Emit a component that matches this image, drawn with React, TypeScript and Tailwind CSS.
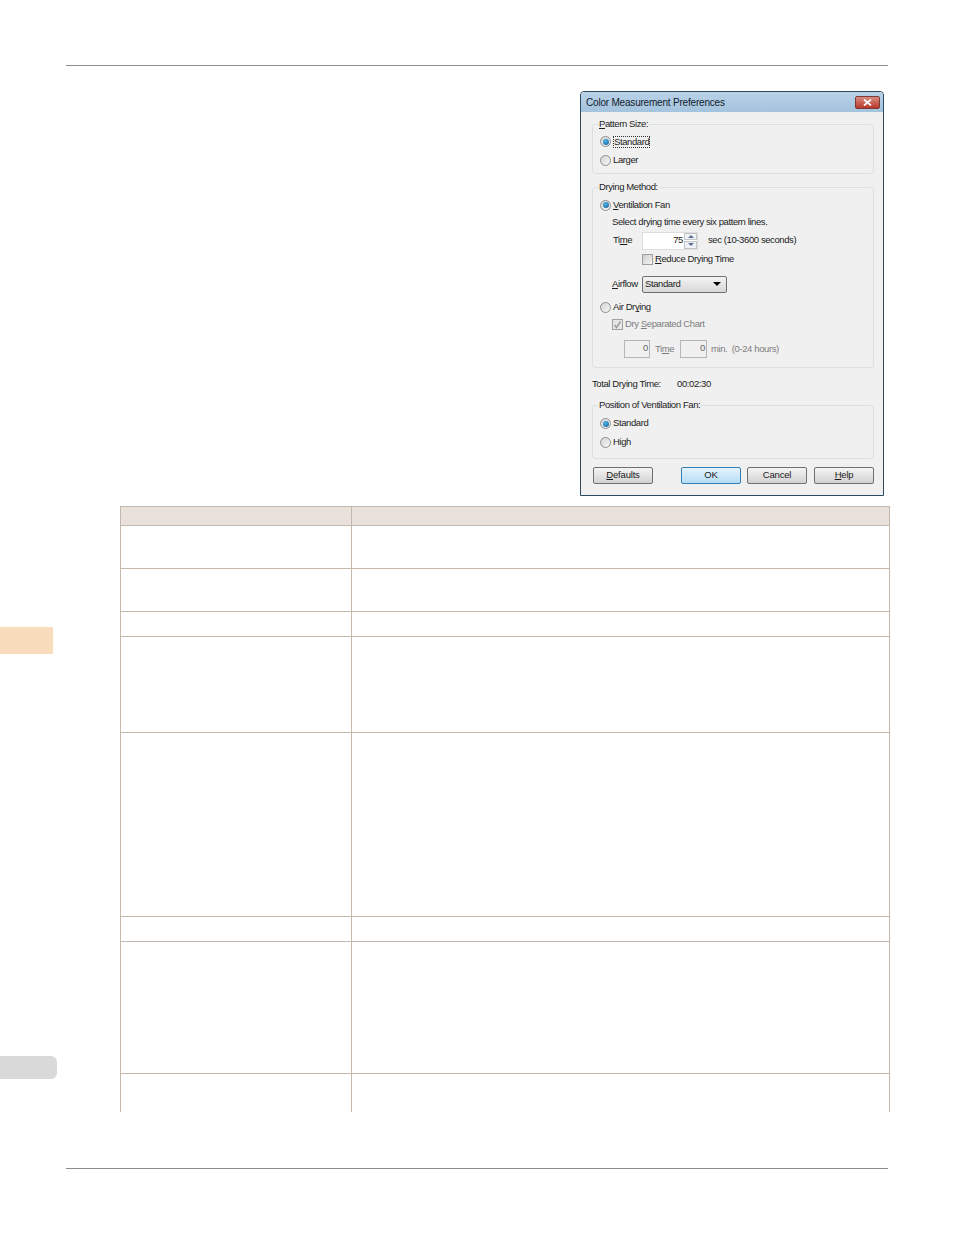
import type { ReactNode } from 'react';

const rows = [
  { height: 'h-[42px]' },
  { height: 'h-[43px]' },
  { height: 'h-[25px]' },
  { height: 'h-[96px]' },
  { height: 'h-[184px]' },
  { height: 'h-[25px]' },
  { height: 'h-[132px]' },
  { height: 'h-[39px]' },
];

function Radio({ checked = false }: { checked?: boolean }) {
  return (
    <span className="flex h-[11px] w-[11px] shrink-0 items-center justify-center rounded-full border border-[#8e8f8f] bg-gradient-to-br from-[#d4d4d4] to-[#f7f7f7]">
      {checked ? <span className="h-[6px] w-[6px] rounded-full bg-[radial-gradient(circle_at_40%_35%,#4fb4e6,#0f5a92)]" /> : null}
    </span>
  );
}

function Check({ checked = false, disabled = false }: { checked?: boolean; disabled?: boolean }) {
  return (
    <span className={`flex h-[11px] w-[11px] shrink-0 items-center justify-center border border-[#a0a0a0] ${disabled ? 'bg-[#e6e6e6]' : 'bg-gradient-to-br from-[#cfcfcf] to-[#f4f4f4]'}`}>
      {checked ? (
        <svg viewBox="0 0 9 9" className="h-[9px] w-[9px]">
          <path d="M1.5 5 L3.5 7.5 L7.5 1.5" fill="none" stroke="#9a9a9a" strokeWidth="1.4" />
        </svg>
      ) : null}
    </span>
  );
}

function GroupBox({ title, className, children }: { title: ReactNode; className: string; children: ReactNode }) {
  return (
    <div className={`relative ml-[11px] w-[282px] rounded-[3px] border border-[#dadfe3] ${className}`}>
      <span className="absolute left-[5px] top-[-7px] bg-[#f0f0f0] px-[1px] leading-[12px]">{title}</span>
      {children}
    </div>
  );
}

function PushButton({ children, primary = false, className = '' }: { children: ReactNode; primary?: boolean; className?: string }) {
  return (
    <div
      className={`flex h-[17px] w-[60px] items-center justify-center rounded-[2px] border tracking-[-0.2px] ${
        primary ? 'border-[#2f80b5] bg-gradient-to-b from-[#e6f4fc] to-[#b5dcf5]' : 'border-[#707070] bg-gradient-to-b from-[#f4f4f4] to-[#d2d2d2]'
      } ${className}`}
    >
      {children}
    </div>
  );
}

function NumberField({ value, className }: { value: string; className: string }) {
  return <div className={`h-[18px] border border-[#b5b5b5] pr-[1px] text-right leading-[14px] text-[#666] ${className}`}>{value}</div>;
}

function ColorDialog() {
  return (
    <div className="h-[405px] w-[304px] overflow-hidden rounded-t-[4px] border border-[#2c4a5e] bg-[#f0f0f0] text-[9.5px] tracking-[-0.4px] text-[#1c1c1c]">
      <div className="flex h-[20px] items-center justify-between bg-gradient-to-b from-[#b9d2e8] to-[#a4c3dd] pl-[5px] pr-[3px]">
        <span className="text-[10px] tracking-[-0.2px] text-[#10202c]">Color Measurement Preferences</span>
        <div className="mt-[1px] flex h-[13px] w-[25px] items-center justify-center rounded-[2px] border border-[#7d3b35] bg-gradient-to-b from-[#d9897f] to-[#b8352a]">
          <svg viewBox="0 0 9 7" className="h-[7px] w-[9px]">
            <path d="M1 0.5 L8 6.5 M8 0.5 L1 6.5" stroke="#fff" strokeWidth="1.7" />
          </svg>
        </div>
      </div>

      <GroupBox className="mt-[12px] h-[50px] pt-[7px]" title={<><u>P</u>attern Size:</>}>
        <div className="flex h-[19px] items-center gap-[2px] pl-[7px]">
          <Radio checked />
          <span className="border border-dotted border-[#333] leading-[10px]">Standard</span>
        </div>
        <div className="flex h-[19px] items-center gap-[2px] pl-[7px]">
          <Radio />
          <span>Larger</span>
        </div>
      </GroupBox>

      <GroupBox className="mt-[13px] h-[181px] pt-[8px]" title="Drying Method:">
        <div className="flex h-[18px] items-center gap-[2px] pl-[7px]">
          <Radio checked />
          <span><u>V</u>entilation Fan</span>
        </div>
        <div className="flex h-[17px] items-center pl-[19px]">Select drying time every six pattern lines.</div>
        <div className="flex h-[19px] items-center pl-[20px]">
          <span className="w-[29px]">Ti<u>m</u>e</span>
          <div className="flex h-[18px] w-[56px] border border-[#dedede] bg-white">
            <span className="flex-1 pr-[1px] text-right leading-[14px]">75</span>
            <div className="flex w-[13px] flex-col gap-[1px]">
              <div className="flex flex-1 items-center justify-center border border-[#c4c4c4] bg-[#eef1f5]">
                <span className="h-0 w-0 border-x-[3px] border-b-[3px] border-x-transparent border-b-[#5a6f8c]" />
              </div>
              <div className="flex flex-1 items-center justify-center border border-[#c4c4c4] bg-[#eef1f5]">
                <span className="h-0 w-0 border-x-[3px] border-t-[3px] border-x-transparent border-t-[#5a6f8c]" />
              </div>
            </div>
          </div>
          <span className="ml-[10px]">sec (10-3600 seconds)</span>
        </div>
        <div className="flex h-[18px] items-center gap-[2px] pl-[49px]">
          <Check />
          <span><u>R</u>educe Drying Time</span>
        </div>
        <div className="flex h-[32px] items-center pl-[19px]">
          <span className="w-[30px]"><u>A</u>irflow</span>
          <div className="flex h-[17px] w-[85px] items-center justify-between rounded-[2px] border border-[#707070] bg-gradient-to-b from-[#f4f4f4] to-[#d8d8d8] pl-[2px] pr-[5px]">
            <span>Standard</span>
            <span className="h-0 w-0 border-x-[4px] border-t-[4px] border-x-transparent border-t-black" />
          </div>
        </div>
        <div className="flex h-[15px] items-center gap-[2px] pl-[7px]">
          <Radio />
          <span>Air Dr<u>y</u>ing</span>
        </div>
        <div className="flex h-[18px] items-center gap-[2px] pl-[19px] text-[#7d7d7d]">
          <Check checked disabled />
          <span>Dry <u>S</u>eparated Chart</span>
        </div>
        <div className="mt-[7px] flex h-[18px] items-center pl-[31px] text-[#7d7d7d]">
          <NumberField value="0" className="w-[26px]" />
          <span className="ml-[5px] w-[25px]">Ti<u>m</u>e</span>
          <NumberField value="0" className="w-[27px]" />
          <span className="ml-[4px]">min.&nbsp;&nbsp;(0-24 hours)</span>
        </div>
      </GroupBox>

      <div className="ml-[11px] mt-[10px] flex h-[12px] items-center">
        <span className="w-[85px]">Total Drying Time:</span>
        <span>00:02:30</span>
      </div>

      <GroupBox className="mt-[15px] h-[54px] pt-[8px]" title="Position of Ventilation Fan:">
        <div className="flex h-[19px] items-center gap-[2px] pl-[7px]">
          <Radio checked />
          <span>Standard</span>
        </div>
        <div className="flex h-[19px] items-center gap-[2px] pl-[7px]">
          <Radio />
          <span>High</span>
        </div>
      </GroupBox>

      <div className="ml-[12px] mt-[8px] flex">
        <PushButton><span><u>D</u>efaults</span></PushButton>
        <PushButton primary className="ml-[28px]">OK</PushButton>
        <PushButton className="ml-[6px]">Cancel</PushButton>
        <PushButton className="ml-[7px]"><span><u>H</u>elp</span></PushButton>
      </div>
    </div>
  );
}

export default function App() {
  return (
    <div className="h-[1235px] w-[954px] bg-white font-['Liberation_Sans',sans-serif]">
      <div className="h-[66px] pt-[65px]">
        <div className="ml-[66px] h-px w-[822px] bg-[#8c8c8c]" />
      </div>

      <div className="flex h-[1046px]">
        <aside className="w-[120px] shrink-0">
          <div className="mt-[561px] h-[27px] w-[53px] bg-[#f9dcbb]" />
          <div className="mt-[402px] h-[23px] w-[57px] rounded-r-[6px] bg-[#d9d9d9]" />
        </aside>

        <main className="w-[770px]">
          <div className="ml-[460px] mt-[25px]">
            <ColorDialog />
          </div>
          <div className="mt-[10px] border-r border-[#c4b7ac]">
            <div className="flex h-[20px] border-y border-[#c4b7ac] bg-[#e9e1db]">
              <div className="w-[231px] border-l border-[#c4b7ac]" />
              <div className="flex-1 border-l border-[#c4b7ac]" />
            </div>
            {rows.map((row, index) => (
              <div key={index} className={`flex ${row.height} ${index > 0 ? 'border-t border-[#c4b7ac]' : ''}`}>
                <div className="w-[231px] border-l border-[#c4b7ac]" />
                <div className="flex-1 border-l border-[#c4b7ac]" />
              </div>
            ))}
          </div>
        </main>
      </div>

      <div className="ml-[66px] mt-[56px] h-px w-[822px] bg-[#8c8c8c]" />
    </div>
  );
}
